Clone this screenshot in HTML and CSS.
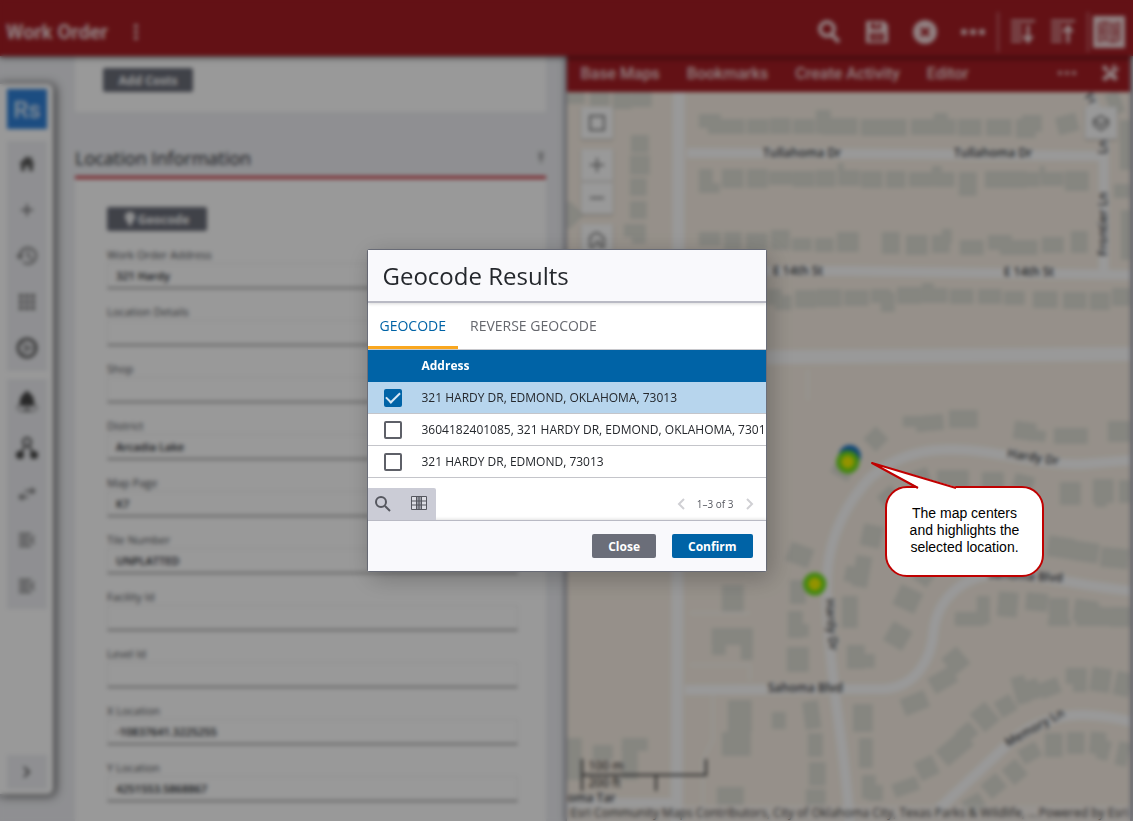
FILE: index.html
```html
<!DOCTYPE html>
<html lang="en">
<head>
<meta charset="utf-8">
<title>Work Order</title>
<link rel="stylesheet" href="styles.css">
</head>
<body>
<div class="app">
  <header class="topbar">
    <h1 class="topbar-title">Work Order</h1>
    <button class="icon-btn kebab" aria-label="Menu"><svg width="6" height="18" viewBox="0 0 6 18"><circle cx="3" cy="3" r="2"/><circle cx="3" cy="9" r="2"/><circle cx="3" cy="15" r="2"/></svg></button>
    <div class="topbar-actions">
      <button class="icon-btn" aria-label="Search"><svg width="24" height="24" viewBox="0 0 24 24"><circle cx="10" cy="9" r="7" fill="none" stroke="currentColor" stroke-width="4"/><path d="M14 14l8 8" stroke="currentColor" stroke-width="4"/></svg></button>
      <button class="icon-btn" aria-label="Save"><svg width="24" height="24" viewBox="0 0 24 24"><path fill-rule="evenodd" d="M1 1h18l4 4v18H1zM6 3v6h10V3h-3v4h-3V3zM5 13v8h14v-8zM7 15h10v1H7zM7 18h10v1H7z"/></svg></button>
      <button class="icon-btn" aria-label="Cancel"><svg width="24" height="24" viewBox="0 0 24 24"><circle cx="12" cy="12" r="12"/><path d="M8 8l8 8M16 8l-8 8" stroke="#a51d24" stroke-width="3"/></svg></button>
      <button class="icon-btn" aria-label="More"><svg width="24" height="24" viewBox="0 0 24 24"><circle cx="3" cy="12" r="3"/><circle cx="12" cy="12" r="3"/><circle cx="21" cy="12" r="3"/></svg></button>
      <span class="divider"></span>
      <button class="icon-btn" aria-label="Expand all"><svg width="24" height="24" viewBox="0 0 24 24" fill="none" stroke="currentColor" stroke-width="2"><path d="M0 1h24M0 6h11M0 11h11M0 16h11M0 21h11"/><path d="M17 5v14" stroke-width="3"/><path d="M11 16h12l-6 8z" fill="currentColor" stroke="none"/></svg></button>
      <button class="icon-btn" aria-label="Collapse all"><svg width="24" height="24" viewBox="0 0 24 24" fill="none" stroke="currentColor" stroke-width="2"><path d="M0 1h24M0 6h11M0 11h11M0 16h11M0 21h11"/><path d="M17 9v14" stroke-width="3"/><path d="M11 12h12l-6-8z" fill="currentColor" stroke="none"/></svg></button>
      <span class="divider"></span>
      <button class="icon-btn map-toggle" aria-label="Map"><svg width="24" height="24" viewBox="0 0 24 24" fill="none" stroke="#b5484e" stroke-width="2"><path d="M2 4l6-2 8 3 6-2v17l-6 2-8-3-6 2zM8 2v17M16 5v17M5 6v10M12 6v11M19 7v10"/></svg></button>
    </div>
  </header>

  <div class="workspace">
    <section class="record">
      <nav class="rail" aria-label="Main">
        <a class="rail-logo" href="#">Rs</a>
        <div class="rail-group">
          <button class="icon-btn dark" aria-label="Home"><svg width="18" height="18" viewBox="0 0 18 18"><path d="M9 1L1 9h2v7h4v-5h4v5h4V9h2l-3-3V2h-2v2z"/></svg></button>
          <button class="icon-btn" aria-label="Add"><svg width="18" height="18" viewBox="0 0 18 18"><path d="M9 3v12M3 9h12" stroke="currentColor" stroke-width="2"/></svg></button>
          <button class="icon-btn" aria-label="History"><svg width="22" height="20" viewBox="0 0 22 20" fill="none" stroke="currentColor" stroke-width="2"><path d="M4 10a8 8 0 1 1 3 6M12 5v5l4 3"/><path d="M0 9h8l-4 5z" fill="currentColor" stroke="none"/></svg></button>
          <button class="icon-btn" aria-label="Apps"><svg width="18" height="18" viewBox="0 0 18 18"><path d="M1 1h4v4H1zM7 1h4v4H7zM13 1h4v4h-4zM1 7h4v4H1zM7 7h4v4H7zM13 7h4v4h-4zM1 13h4v4H1zM7 13h4v4H7zM13 13h4v4h-4z"/></svg></button>
          <button class="icon-btn dark" aria-label="Dashboard"><svg width="22" height="22" viewBox="0 0 22 22" fill="none" stroke="currentColor" stroke-width="1"><circle cx="11" cy="11" r="9" stroke-width="3"/><path d="M5 4l6 7h9M11 11l-5 7"/><circle cx="11" cy="11" r="3"/></svg></button>
        </div>
        <div class="rail-group">
          <button class="icon-btn darker" aria-label="Alerts"><svg width="22" height="24" viewBox="0 0 22 24"><path d="M11 1c2 0 2 2 2 2 4 2 5 6 5 9l1 4H3l1-4c0-3 1-7 5-9 0 0 0-2 2-2z"/><path d="M2 15c-2 4 1 6 4 6h10c4 0 6-2 4-6M9 18h4v3H9z" fill="none" stroke="currentColor" stroke-width="1"/></svg></button>
          <button class="icon-btn darker" aria-label="Relations"><svg width="22" height="24" viewBox="0 0 22 24"><circle cx="11" cy="6" r="4" fill="none" stroke="currentColor" stroke-width="2"/><path d="M9 10l-5 9M13 10l5 9" stroke="currentColor" stroke-width="2"/><circle cx="4" cy="19" r="4"/><circle cx="18" cy="19" r="4"/></svg></button>
          <button class="icon-btn" aria-label="Transfer"><svg width="18" height="16" viewBox="0 0 18 16"><path d="M7 4h6V1l5 4-5 4V6H7zM10 10H5V7l-5 4 5 4v-3h5z"/></svg></button>
          <button class="icon-btn" aria-label="Expand menu"><svg width="18" height="16" viewBox="0 0 18 16" fill="none" stroke="currentColor" stroke-width="2"><path d="M1 2h12M1 6h10M1 10h10M1 14h12M16 4l-3 4 3 4"/></svg></button>
          <button class="icon-btn" aria-label="Collapse menu"><svg width="18" height="16" viewBox="0 0 18 16" fill="none" stroke="currentColor" stroke-width="2"><path d="M1 2h12M1 6h10M1 10h10M1 14h12M16 4l-3 4 3 4"/></svg></button>
        </div>
        <div class="rail-group rail-end">
          <button class="icon-btn dark" aria-label="Open"><svg width="12" height="16" viewBox="0 0 12 16"><path d="M3 3l5 5-5 5" fill="none" stroke="currentColor" stroke-width="2"/></svg></button>
        </div>
      </nav>

      <form class="form">
        <div class="card card-costs"><button type="button" class="btn btn-grey btn-wide">Add Costs</button></div>
        <div class="section-head">
          <h2>Location Information</h2>
          <svg width="10" height="12" viewBox="0 0 10 12" fill="none" stroke="#555" stroke-width="1"><path d="M2 1h6M2 6l3-3 3 3M5 3v8"/></svg>
        </div>
        <div class="card card-location">
          <button type="button" class="btn btn-grey btn-geo"><svg width="10" height="14" viewBox="0 0 10 14"><path fill-rule="evenodd" d="M5 0a5 5 0 0 1 5 5c0 3-4 5-4 9H4c0-4-4-6-4-9a5 5 0 0 1 5-5zM5 4a1 1 0 1 0 0 2 1 1 0 0 0 0-2z"/></svg>Geocode</button>
          <div class="field"><label for="f1">Work Order Address</label><input id="f1" value="321 Hardy"></div>
          <div class="field"><label for="f2">Location Details</label><input id="f2"></div>
          <div class="field"><label for="f3">Shop</label><input id="f3"></div>
          <div class="field"><label for="f4">District</label><input id="f4" value="Arcadia Lake"></div>
          <div class="field"><label for="f5">Map Page</label><input id="f5" value="K7"></div>
          <div class="field"><label for="f6">Tile Number</label><input id="f6" value="UNPLATTED"></div>
          <div class="field"><label for="f7">Facility Id</label><input id="f7"></div>
          <div class="field"><label for="f8">Level Id</label><input id="f8"></div>
          <div class="field"><label for="f9">X Location</label><input id="f9" value="-10837641.3225255"></div>
          <div class="field"><label for="f10">Y Location</label><input id="f10" value="4251553.5868867"></div>
        </div>
      </form>
    </section>

    <section class="map-panel">
      <nav class="map-menu" aria-label="Map">
        <a href="#">Base Maps</a><a href="#">Bookmarks</a><a href="#">Create Activity</a><a href="#">Editor</a>
        <button class="icon-btn map-more" aria-label="More"><svg width="18" height="6" viewBox="0 0 18 6"><circle cx="2" cy="3" r="2"/><circle cx="9" cy="3" r="2"/><circle cx="16" cy="3" r="2"/></svg></button>
        <button class="icon-btn" aria-label="Tools"><svg width="18" height="18" viewBox="0 0 18 18"><path d="M1 3l3-2 3 3v2l4 4 2-1 4 5-3 3-5-4v-2L5 7H3zM11 6V2l3-2 1 1-2 3 1 1 3-2 1 1-2 4h-3l-8 9-3-1-1-2z"/></svg></button>
      </nav>
      <div class="map">
        <svg class="map-canvas" viewBox="567 92 564 729" preserveAspectRatio="xMidYMid slice">
          <g id="buildings" class="buildings"></g>
          <g class="roads">
            <path class="w12" d="M679 92L677 821"/>
            <path class="w10" d="M687 153L900 154L1104 156M687 271L850 271L1133 275M1086 92Q1104 115 1104 150V272"/>
            <path class="w14" d="M685 358L1133 354"/>
            <path class="w10" d="M850 821Q846 770 836 700Q828 640 827 590C826 540 845 505 870 478C900 452 935 445 985 452C1020 457 1055 466 1085 464L1133 460"/>
            <path class="w10" d="M685 690L885 689C915 687 932 660 934 630C938 600 962 575 1000 574C1040 574 1080 586 1133 591"/>
            <path class="w10" d="M936 812L1004 748C1030 722 1060 714 1085 715Q1110 716 1133 722M567 803H673"/>
            <path class="path" d="M690 613H750M690 665H750V680M713 695V740L703 760V821M808 370V400"/>
          </g>
          <g class="map-label">
            <text x="763" y="157">Tullahoma Dr</text>
            <text x="954" y="157">Tullahoma Dr</text>
            <text x="773" y="275">E 14th St</text>
            <text x="1004" y="276">E 14th St</text>
            <text transform="translate(1107 256) rotate(-90)">Frontier Ln</text>
            <text transform="translate(1107 154) rotate(-90)">Ln</text>
            <text transform="translate(1084 97) rotate(50)">Fr</text>
            <text transform="translate(1007 457) rotate(9)">Hardy Dr</text>
            <text transform="translate(826 599) rotate(86)">Hardy Dr</text>
            <text transform="translate(988 578) rotate(3)">Sahoma Blvd</text>
            <text x="768" y="692">Sahoma Blvd</text>
            <text transform="translate(1008 747) rotate(-29)">Memory Ln</text>
            <text x="568" y="802">oma Tar</text>
          </g>
          <circle cx="850" cy="456" r="11" fill="#1674c8"/>
          <circle class="pin" cx="848" cy="462" r="9"/>
          <circle class="pin" cx="815" cy="584" r="9"/>
        </svg>
        <div class="map-tools">
          <button aria-label="Extent"><svg width="18" height="18" viewBox="0 0 18 18"><path d="M2 2h14v14H2z"/></svg></button>
          <div class="zoomer">
            <button aria-label="Zoom in"><svg width="18" height="18" viewBox="0 0 18 18"><path d="M9 2v14M2 9h14"/></svg></button>
            <button aria-label="Zoom out"><svg width="18" height="18" viewBox="0 0 18 18"><path d="M2 9h14"/></svg></button>
          </div>
          <button aria-label="Default view"><svg width="18" height="18" viewBox="0 0 18 18"><path d="M2 16V6l5-4h3l6 5v9h-4v-5H8l-2 5z"/></svg></button>
        </div>
        <button class="layers" aria-label="Layers"><svg width="18" height="18" viewBox="0 0 18 18"><path d="M9 2l7 4-7 5-7-5zM2 6v5l7 5 7-5V6"/></svg></button>
        <div class="scale"><span class="metric">100 m</span><span class="imperial">200 ft</span></div>
        <div class="attribution"><span>Esri Community Maps Contributors, City of Oklahoma City, Texas Parks &amp; Wildlife, ...</span><span class="powered">Powered by <a href="#">Esri</a></span></div>
      </div>
    </section>
  </div>
</div>

<div class="backdrop">
  <section class="modal" role="dialog" aria-modal="true" aria-labelledby="dlg-title">
    <header class="modal-head"><h2 id="dlg-title">Geocode Results</h2></header>
    <div class="tabs" role="tablist">
      <button class="tab active" role="tab" aria-selected="true">GEOCODE</button>
      <button class="tab" role="tab" aria-selected="false">REVERSE GEOCODE</button>
    </div>
    <div class="results">
      <table>
        <thead><tr><th class="pick"></th><th>Address</th></tr></thead>
        <tbody>
          <tr class="selected"><td class="pick"><input type="checkbox" checked aria-labelledby="a1"></td><td id="a1">321 HARDY DR, EDMOND, OKLAHOMA, 73013</td></tr>
          <tr><td class="pick"><input type="checkbox" aria-labelledby="a2"></td><td id="a2">3604182401085, 321 HARDY DR, EDMOND, OKLAHOMA, 73013</td></tr>
          <tr><td class="pick"><input type="checkbox" aria-labelledby="a3"></td><td id="a3">321 HARDY DR, EDMOND, 73013</td></tr>
        </tbody>
      </table>
    </div>
    <div class="table-foot">
      <div class="table-tools">
        <button aria-label="Search results"><svg width="18" height="18" viewBox="0 0 18 18" fill="none" stroke="#55575f" stroke-width="2"><circle cx="7" cy="7" r="5"/><path d="M11 11l5 5"/></svg></button>
        <button aria-label="Choose columns"><svg width="18" height="18" viewBox="0 0 18 18" fill="none" stroke="#55575f"><path d="M2 2h4v12H2zM12 2h4v12h-4z" fill="#dcdde4" stroke="none"/><path d="M6 2h6v12H6z" fill="#9a9ca5" stroke="none"/><path d="M1.500 1.500h15v13h-15zM2 6h14M2 10h14M6.500 2v12M9 2v12M11.500 2v12"/></svg></button>
      </div>
      <div class="pager">
        <button aria-label="Previous page" disabled><svg width="8" height="12" viewBox="0 0 8 12"><path d="M7 1L2 6l5 5"/></svg></button>
        <span>1–3 of 3</span>
        <button aria-label="Next page" disabled><svg width="8" height="12" viewBox="0 0 8 12"><path d="M1 1l5 5-5 5"/></svg></button>
      </div>
    </div>
    <footer class="modal-foot">
      <button class="btn btn-grey">Close</button>
      <button class="btn btn-blue">Confirm</button>
    </footer>
  </section>
</div>

<aside class="callout">
  <p>The map centers and highlights the selected location.</p>
  <svg class="callout-tail" width="90" height="30" viewBox="0 0 90 30"><path d="M48 30V26L2 2L86 26V30z" fill="#fff"/><path d="M48 27L2 2L86 27" fill="none" stroke="#c00000" stroke-width="2" stroke-linejoin="round"/></svg>
</aside>
<script src="map.js"></script>
</body>
</html>
```

FILE: styles.css
```css
* { box-sizing: border-box; }
body { margin: 0; font-family: "Open Sans", "Noto Sans", sans-serif; font-size: 12px; color: #25282d; }
h1, h2, p { margin: 0; }
button { font: inherit; cursor: pointer; }
a { color: inherit; text-decoration: none; }

.app { height: 100vh; display: flex; flex-direction: column; overflow: hidden; background: #eeeff3; }
.icon-btn { border: 0; padding: 0; background: none; color: inherit; display: flex; align-items: center; justify-content: center; }
.icon-btn svg { fill: currentColor; }
.icon-btn svg[fill="none"] { fill: none; }

.topbar { flex: none; height: 56px; padding: 8px 8px 0 6px; display: flex; align-items: center; background: #a51d24; color: #f3d8da; box-shadow: 0 2px 5px rgba(0,0,0,.5); position: relative; z-index: 2; }
.topbar-title { font: 700 20px Roboto, sans-serif; }
.kebab { margin-left: 25px; }
.topbar-actions { margin-left: auto; display: flex; align-items: center; gap: 24px; }
.divider { width: 2px; height: 40px; margin: 0 -12px; background: #c96a70; }
.topbar-actions .icon-btn:nth-child(7) { margin-left: -8px; }
.map-toggle { width: 32px; height: 32px; background: #f3d8da; margin-left: -8px; }

.workspace { flex: 1; min-height: 0; display: grid; grid-template: minmax(0, 1fr) / minmax(0, 1fr) minmax(0, 1fr); }
.record { display: flex; gap: 22px; padding-right: 21px; min-height: 0; }
.rail { flex: none; width: 53px; margin: 28px 0 27px; padding: 5px 7px; display: flex; flex-direction: column; gap: 8px; background: #fff; border-radius: 0 6px 6px 0; box-shadow: 2px 1px 8px 2px rgba(0,0,0,.5); color: #777; }
.rail-logo { height: 40px; margin-bottom: 4px; width: 40px; background: #2f80d8; color: #dcebfa; font: 500 24px/42px Roboto, sans-serif; text-align: center; }
.rail-group { display: flex; flex-direction: column; background: #eeeff3; width: 40px; }
.rail-group .icon-btn { height: 46px; }
.rail-group .dark { color: #5a5a5a; }
.rail-group .darker { color: #444; }
.rail-end { margin-top: auto; }
.rail-end .icon-btn { height: 34px; }

.form { flex: 1; min-width: 0; }
.card { background: #fff; display: flex; flex-direction: column; align-items: flex-start; }
.card-costs { padding: 12px 28px 20px; }
.section-head { display: flex; align-items: center; justify-content: space-between; height: 67px; padding-top: 28px; border-bottom: 3px solid #c8323c; }
.section-head h2 { font-size: 18px; font-weight: 500; line-height: 28px; }
.card-location { padding: 28px 28px 40px 32px; }
.btn { border: 0; border-radius: 2px; height: 24px; padding: 0 16px; font-weight: 700; font-size: 12px; color: #fff; display: flex; align-items: center; justify-content: center; gap: 3px; white-space: nowrap; }
.btn svg { fill: #fff; }
.btn-grey { background: #6b6e79; }
.btn-blue { background: #0063a6; }
.btn-wide { width: 90px; }
.btn-geo { width: 100px; margin-bottom: 16px; }
.field { width: 100%; margin-bottom: 15px; display: flex; flex-direction: column; }
.field label { font-size: 11px; line-height: 16px; color: #484b50; }
.field input { height: 26px; padding: 0 8px; border: 1px solid #eee; border-bottom: 2px solid #a5a5a5; background: #fff; font: 600 11px "Open Sans", sans-serif; color: #25282d; }

.map-panel { display: flex; flex-direction: column; min-height: 0; margin-right: 3px; box-shadow: 0 0 6px 1px rgba(40,40,60,.7); }
.map-menu { flex: none; height: 36px; padding: 0 11px 2px 14px; display: flex; align-items: center; gap: 27px; background: #a51d24; color: #f3d8da; font: 500 16px Roboto, sans-serif; }
.map-more { margin: 0 -2px 0 auto; }
.map { flex: 1; min-height: 0; position: relative; background: #faf1e6; overflow: hidden; }
.map-canvas { position: absolute; inset: 0; width: 100%; height: 100%; }
.buildings { fill: #dfdfd6; }
.roads { fill: none; stroke: #fff; stroke-linejoin: round; }
.w10 { stroke-width: 10px; }
.w12 { stroke-width: 12px; }
.w14 { stroke-width: 14px; }
.path { stroke-width: 3px; stroke: #fcf7f0; }
.map-label { font: 600 12px "Open Sans", sans-serif; fill: #3c3c3c; stroke: #fff; stroke-width: 2px; paint-order: stroke; }
.pin { fill: #f6f600; stroke: #6ee01a; stroke-width: 5px; }
.map-tools { position: absolute; left: 14px; top: 15px; display: flex; flex-direction: column; gap: 10px; }
.map-tools button, .layers { width: 32px; height: 32px; border: 0; padding: 0; display: flex; align-items: center; justify-content: center; background: #fff; box-shadow: 0 1px 2px rgba(0,0,0,.3); }
.map-tools svg, .layers svg { fill: none; stroke: #888; stroke-width: 2px; }
.zoomer { display: flex; flex-direction: column; gap: 1px; }
.layers { position: absolute; right: 13px; top: 15px; }
.scale { position: absolute; left: 14px; bottom: 30px; width: 126px; font: 12px "Noto Sans", sans-serif; color: #222; }
.metric, .imperial { display: block; height: 17px; line-height: 14px; padding-left: 6px; border: 2px solid #444; }
.metric { border-top: 0; }
.imperial { width: 76px; margin-top: -2px; border-bottom: 0; }
.attribution { position: absolute; left: 0; right: 0; bottom: 0; height: 16px; padding: 0 2px 0 4px; display: flex; justify-content: space-between; background: rgba(255,255,255,.4); font: 12px/16px "Open Sans", sans-serif; color: #3c3c3c; white-space: nowrap; }

.backdrop { position: fixed; inset: 0; display: flex; align-items: center; justify-content: center; background: rgba(0,0,0,.4); backdrop-filter: blur(2px); z-index: 10; }
.modal { width: 400px; border: 1px solid #6b6e79; border-radius: 2px; background: #fff; box-shadow: 4px 6px 24px rgba(0,0,0,.25); }
.modal-head { height: 53px; padding: 0 15px; display: flex; align-items: center; background: #f9f9fc; border-bottom: 2px solid #b9bac4; box-shadow: 0 1px 3px rgba(0,0,0,.15); }
.modal-head h2 { font-size: 24px; font-weight: 500; }
.tabs { height: 47px; display: flex; border-bottom: 1px solid #c8c8cc; }
.tab { border: 0; border-bottom: 3px solid transparent; background: none; padding: 2px 12px 0; font-size: 14px; color: #66686e; }
.tab.active { color: #0063a6; border-color: #f9a71f; }
.results { overflow: hidden; }
table { border-collapse: collapse; width: 100%; table-layout: fixed; }
th, td { height: 32px; padding: 0; text-align: left; white-space: nowrap; }
th { background: #0063a6; color: #fff; font-weight: 700; }
td { border-bottom: 1px solid #c4c5ca; font-weight: 400; }
.pick { width: 54px; padding-left: 16px; }
.selected td { background: #b7d5ed; }
td input { appearance: none; display: block; width: 18px; height: 18px; margin: 0; border: 2px solid #5e6068; border-radius: 2px; background: #fff; }
td input:checked { border-color: #0063a6; background: #0063a6; display: flex; align-items: center; justify-content: center; }
td input:checked::after { content: ""; width: 12px; height: 6px; margin-top: -3px; border-left: 2px solid #d8e8f5; border-bottom: 2px solid #d8e8f5; transform: rotate(-45deg); }
.table-foot { margin-top: 10px; height: 32px; display: flex; justify-content: space-between; }
.table-tools { display: flex; gap: 18px; padding: 0 8px 0 6px; background: #cbccd6; border-radius: 0 2px 0 0; }
.table-tools button, .pager button { border: 0; padding: 0; background: none; display: flex; align-items: center; }
.pager { display: flex; align-items: center; gap: 12px; padding-right: 12px; font-size: 10px; color: #55575f; }
.pager svg { fill: none; stroke: #d0d0d4; stroke-width: 2px; }
.modal-foot { height: 51px; padding: 0 13px; display: flex; align-items: center; justify-content: flex-end; gap: 16px; background: #f9f9fc; border-top: 1px solid #b9bac4; box-shadow: 0 -1px 3px rgba(0,0,0,.12); }

.callout { position: fixed; left: 885px; top: 486px; z-index: 11; width: 159px; height: 91px; padding-bottom: 2px; display: flex; align-items: center; justify-content: center; border: 2px solid #c00000; border-radius: 22px; background: #fff; color: #000; font: 14px/17px "Liberation Sans", Arial, sans-serif; text-align: center; }
.callout p { width: 120px; }
.callout-tail { position: absolute; left: -17px; top: -27px; }
```

FILE: map.js
```js
// Building footprints: x, y, width, height, optional rotation in degrees.
const footprints = [
  [567,92,18,12],[590,92,20,14],[613,92,19,17],[632,92,20,15],
  [631,135,18,18],[630,155,20,20],[630,178,17,18],[630,201,17,18],[624,224,22,13],[632,228,14,16],
  [560,205,20,20,45],
  [699,114,22,14],[708,119,37,15],[747,119,22,15],[770,118,21,16],[793,119,22,15],[816,110,15,24],[822,118,36,17],
  [861,119,46,17],[911,119,45,16],[934,113,14,22],[958,119,24,17],[986,119,26,17],[1016,119,20,19],[1022,115,20,17],[1057,115,21,18,-15],
  [1108,92,14,22,-20],[1120,120,13,50],[1114,184,16,14],[1121,210,12,50],
  [699,169,14,24],[708,183,12,10],[722,169,22,19],[747,169,21,19],[769,171,24,14],[793,171,22,16],[816,170,20,17],[838,170,22,16],[838,163,6,10],
  [861,171,22,17],[886,171,20,17],[909,172,24,15],[932,166,10,20],[934,172,21,15],[959,172,18,24],[985,171,42,17],[1026,172,14,15],[1040,166,5,10],[1041,172,23,14],[1065,171,24,20],
  [699,232,22,14],[724,232,18,18],[746,233,22,18],[771,230,19,20],[792,238,20,13],[815,238,19,14],[837,232,22,20],
  [882,232,18,22],[906,235,22,20],[932,235,18,18],[942,229,10,15],[960,240,24,15],[988,235,24,15],[1000,240,38,15],[1042,237,22,16],[1071,231,17,22],
  [767,289,15,16],[775,295,17,15],[795,290,22,18],[817,289,25,18],[844,290,25,16],[871,289,20,14],[881,292,14,20],[897,287,25,17],[922,283,12,20],[924,288,24,15],[950,289,24,15],[978,289,24,15],[1004,291,21,14],[1033,291,25,17],[1063,292,24,17],[1090,292,20,18],[1112,288,20,18],
  [867,430,18,18,45],[903,416,16,11],[916,415,28,16,-5],[949,410,29,18],[1014,422,22,18,8],[1028,430,18,11,8],[1054,428,34,16],[1108,421,25,21],[834,458,20,20,30],
  [910,470,20,16,-20],[937,470,32,25],[982,472,22,25],[1014,475,20,14,15],[1060,482,21,23],[1093,479,21,24],[1095,495,12,12],[1119,480,14,23],
  [862,525,20,22,12],[845,567,18,16,12],[854,556,16,31,10],[788,545,24,20,20],[790,580,16,24],[788,611,15,27],[790,624,19,13],[842,596,16,32],
  [1048,537,26,21,8],[1073,542,26,20,8],[1101,548,28,20,5],[955,612,30,14],[977,596,13,28],[998,592,20,25,5],[1026,593,22,18,5],[1049,598,20,28],[1074,600,24,22,8],[1094,607,20,18,8],[1110,607,23,20],
  [896,588,24,22,25],[915,568,18,16,35],[887,625,22,22,30],[880,489,18,16,-40],
  [722,585,22,28],[712,628,41,17],[712,628,14,27],[741,628,12,32],[728,700,24,32],[722,732,29,24],[772,712,14,17],[804,701,16,28,-8],[808,733,15,24],[809,762,17,24],[806,789,20,16],[717,787,27,18],
  [787,647,22,25],[622,738,26,13],[622,745,16,35],[567,738,15,42],[593,745,20,15],
  [847,645,18,24],[858,654,17,14],[930,671,26,18,-30],[946,650,20,22,-40],[902,694,26,18,-22],[853,704,20,28],[859,738,14,30],[862,775,14,24],[868,785,15,16],
  [893,780,26,14,-20],[917,758,20,20,-25],[938,738,34,20,-40],[958,725,18,16,-40],[975,705,20,24,-40],[997,697,18,18,-30],[1014,676,14,28,-15],[1022,680,18,20,-15],[1040,680,20,16,-20],[1066,668,21,16],[1073,668,14,24],[1091,668,20,24,8],[1115,672,16,24,12],
  [1020,745,20,16,-30],[1006,762,18,20,-40],[984,777,20,18,-40],[964,796,20,16,-30],[1045,733,18,24],[1067,732,18,22],[1090,732,16,22,5],[1098,740,12,20,15],[1117,742,12,24,12],
  [955,618,35,6],[1048,620,23,6],[1076,618,50,8]
];
const layer = document.getElementById("buildings");
for (const [x, y, w, h, turn] of footprints) {
  const box = document.createElementNS("http://www.w3.org/2000/svg", "rect");
  box.setAttribute("x", x);
  box.setAttribute("y", y);
  box.setAttribute("width", w);
  box.setAttribute("height", h);
  if (turn) box.setAttribute("transform", `rotate(${turn} ${x + w / 2} ${y + h / 2})`);
  layer.append(box);
}
```
